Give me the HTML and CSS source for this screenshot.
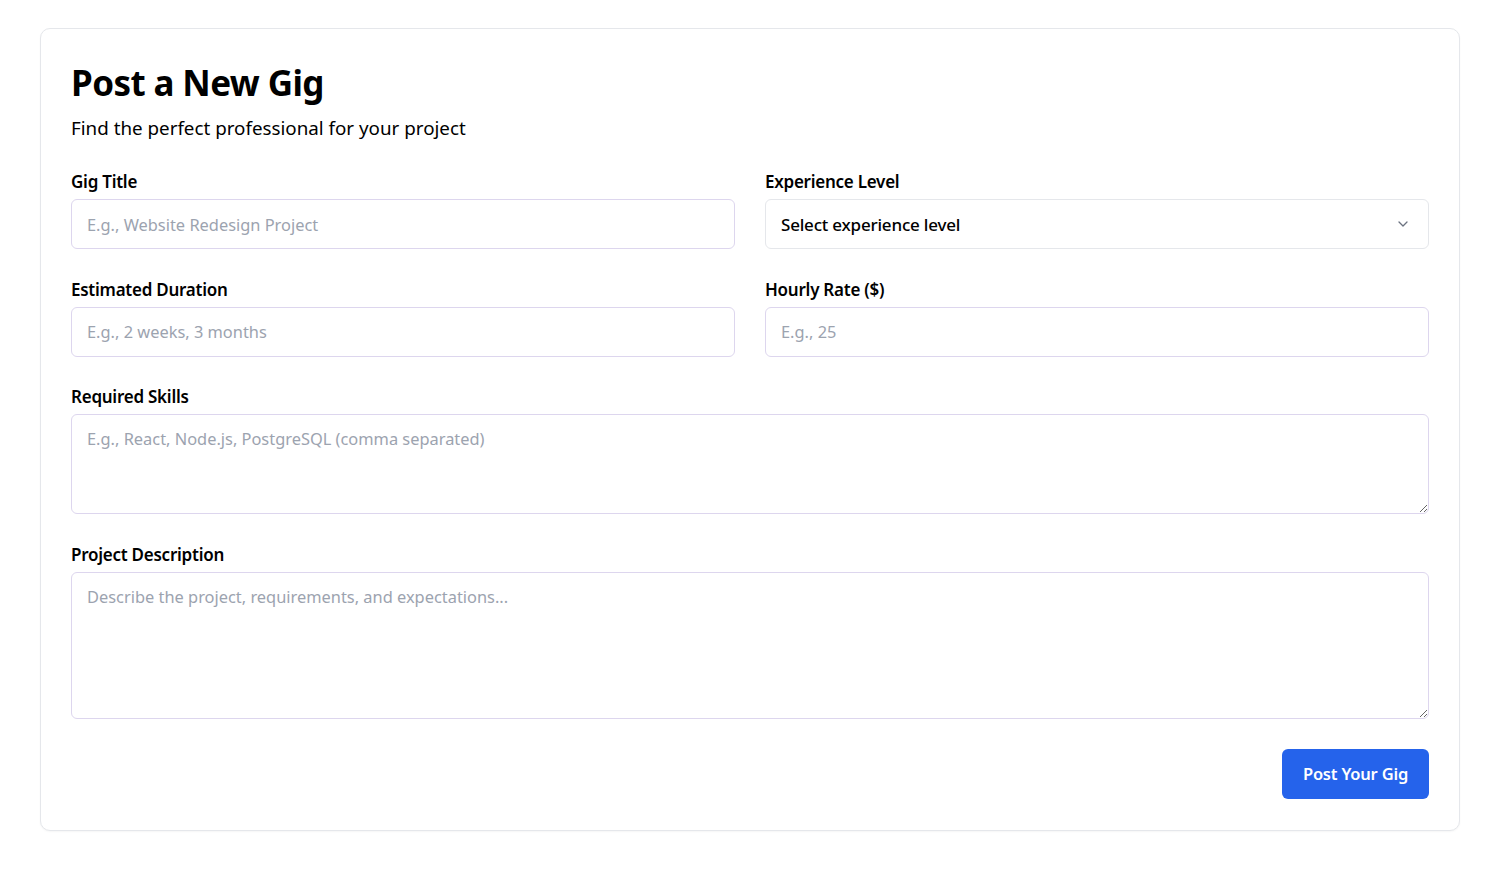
FILE: index.html
```html
<!DOCTYPE html>
<html lang="en">
<head>
<meta charset="utf-8">
<title>Post a New Gig</title>
<link rel="stylesheet" href="styles.css">
</head>
<body>
<div class="page">
  <form class="card">
    <h1 class="title">Post a New Gig</h1>
    <p class="subtitle">Find the perfect professional for your project</p>
    <div class="grid">
      <div class="field">
        <label class="label">Gig Title</label>
        <input class="input" type="text" placeholder="E.g., Website Redesign Project">
      </div>
      <div class="field">
        <label class="label">Experience Level</label>
        <div class="select">
          <span>Select experience level</span>
          <svg class="chev" width="16" height="16" viewBox="0 0 16 16" fill="none" stroke="#6b7280" stroke-width="1.3" stroke-linecap="round" stroke-linejoin="round"><path d="M4 6l4 4 4-4"/></svg>
        </div>
      </div>
      <div class="field">
        <label class="label">Estimated Duration</label>
        <input class="input" type="text" placeholder="E.g., 2 weeks, 3 months">
      </div>
      <div class="field">
        <label class="label">Hourly Rate ($)</label>
        <input class="input" type="text" placeholder="E.g., 25">
      </div>
      <div class="field full">
        <label class="label">Required Skills</label>
        <textarea class="input area skills" placeholder="E.g., React, Node.js, PostgreSQL (comma separated)"></textarea>
      </div>
      <div class="field full">
        <label class="label">Project Description</label>
        <textarea class="input area desc" placeholder="Describe the project, requirements, and expectations..."></textarea>
      </div>
    </div>
    <div class="actions">
      <button type="button" class="btn">Post Your Gig</button>
    </div>
  </form>
</div>
</body>
</html>
```
FILE: styles.css
```css
* { box-sizing: border-box; }
html, body { margin: 0; background: #ffffff; }
body {
  font-family: "Noto Sans", "Open Sans", sans-serif;
  color: #000;
}
.page {
  padding: 28px 46px 40px 40px;
}
.card {
  width: 1420px;
  border: 1px solid #e5e7eb;
  border-radius: 10px;
  box-shadow: 0 1px 2px rgba(0,0,0,0.04);
  padding: 30px 30px 31px 30px;
  background: #fff;
}
.title {
  margin: 0;
  font-size: 35px;
  line-height: 48px;
  font-weight: 700;
  letter-spacing: -0.6px;
}
.subtitle {
  margin: 7px 0 0;
  font-size: 18.8px;
  line-height: 28px;
  font-weight: 400;
}
.grid {
  display: grid;
  grid-template-columns: 1fr 1fr;
  column-gap: 30px;
  row-gap: 30.6px;
  margin-top: 30px;
}
.field { display: flex; flex-direction: column; }
.full { grid-column: 1 / -1; }
.label {
  font-size: 17px;
  line-height: 20px;
  font-weight: 600;
  margin-bottom: 7px;
  letter-spacing: -0.25px;
}
.input {
  height: 50px;
  width: 100%;
  border: 1px solid #ddd6ee;
  border-radius: 6px;
  padding: 0 15px;
  font-family: inherit;
  font-size: 16.4px;
  color: #111;
  background: #fff;
  outline: none;
}
.input::placeholder { color: #9ca3af; }
.area {
  padding: 12px 15px;
  line-height: 24px;
  resize: vertical;
}
.skills { height: 100px; }
.desc { height: 147px; }
.select {
  height: 50px;
  border: 1px solid #e5e7eb;
  border-radius: 6px;
  padding: 0 17px 0 15px;
  display: flex;
  align-items: center;
  justify-content: space-between;
  font-size: 17px;
  font-weight: 500;
  letter-spacing: -0.2px;
}
.actions {
  display: flex;
  justify-content: flex-end;
  margin-top: 30px;
}
.btn {
  width: 147px;
  height: 50px;
  background: #2563eb;
  color: #fff;
  border: none;
  border-radius: 6px;
  font-family: inherit;
  font-size: 16.5px;
  font-weight: 600;
  letter-spacing: -0.2px;
}
```
